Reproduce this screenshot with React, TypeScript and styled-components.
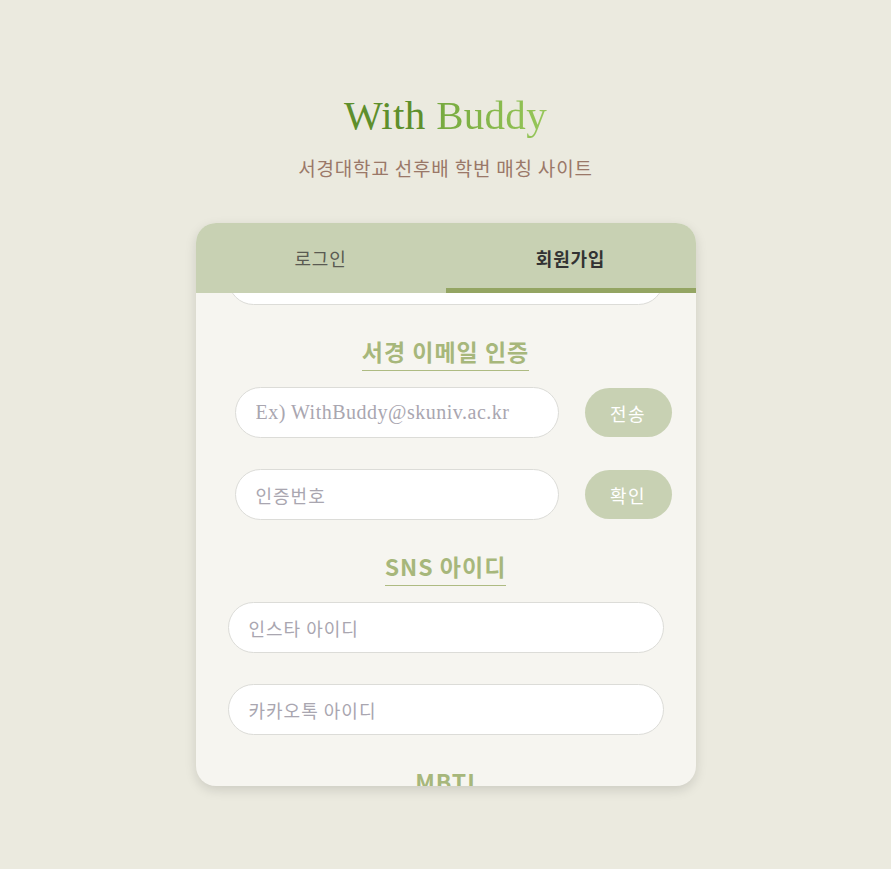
import React, { useLayoutEffect, useRef } from "react";
import styled, { createGlobalStyle } from "styled-components";

const GlobalStyle = createGlobalStyle`
  html, body { margin: 0; padding: 0; background: #ebeadf; }
  body { font-family: "Noto Sans CJK KR", "Noto Sans", sans-serif; }
  * { box-sizing: border-box; }
`;

const Page = styled.div`
  min-height: 869px;
  display: flex;
  flex-direction: column;
  align-items: center;
  padding-top: 91px;
`;

const Title = styled.h1`
  margin: 0;
  font-family: "Liberation Serif", "DejaVu Serif", serif;
  font-weight: 400;
  font-size: 41px;
  line-height: 49px;
  letter-spacing: 0.3px;
`;

const Dark = styled.span`
  color: #5e8f2c;
`;

const Light = styled.span`
  background: linear-gradient(90deg, #76a93e, #97c75a);
  -webkit-background-clip: text;
  background-clip: text;
  color: transparent;
`;

const Subtitle = styled.p`
  margin: 14px 0 0;
  font-size: 19px;
  line-height: 27px;
  color: #9a7868;
  letter-spacing: 0.8px;
`;

const Card = styled.div`
  margin-top: 42px;
  width: 500px;
  height: 563px;
  border-radius: 20px;
  background: #f6f5f0;
  box-shadow: 0 4px 12px rgba(0, 0, 0, 0.13);
  overflow: hidden;
  display: flex;
  flex-direction: column;
`;

const Tabs = styled.div`
  display: flex;
  height: 70px;
  background: #c8d1b3;
  flex-shrink: 0;
`;

const Tab = styled.div<{ $active?: boolean }>`
  flex: 1;
  display: flex;
  align-items: center;
  justify-content: center;
  font-size: 18px;
  letter-spacing: 0.8px;
  color: ${(p) => (p.$active ? "#333" : "#5a5a52")};
  font-weight: ${(p) => (p.$active ? 700 : 400)};
  border-bottom: 5px solid ${(p) => (p.$active ? "#94a563" : "transparent")};
  padding-top: 5px;
`;

const Body = styled.div`
  flex: 1;
  overflow-y: auto;
  scrollbar-width: none;
  padding: 0 32px 40px;
  display: flex;
  flex-direction: column;
  &::-webkit-scrollbar { display: none; }
`;

const SectionTitle = styled.h2<{ $first?: boolean }>`
  align-self: center;
  margin: ${(p) => (p.$first ? "32px" : "1px")} 0 16px;
  font-size: 23px;
  line-height: 29px;
  font-weight: 700;
  letter-spacing: 1px;
  color: #a7b77b;
  padding-bottom: 4px;
  border-bottom: 1px solid #aebb82;
`;

const Input = styled.input`
  height: 51px;
  width: 100%;
  border: 1px solid #dcdcd8;
  border-radius: 26px;
  background: #fff;
  padding: 0 20px;
  font-family: "Noto Sans CJK KR", sans-serif;
  font-size: 18px;
  letter-spacing: 1px;
  color: #333;
  outline: none;
  margin-bottom: 31px;
  flex-shrink: 0;
  &::placeholder { color: #a9a6b0; }
`;

const SerifInput = styled(Input)`
  font-family: "Liberation Serif", "DejaVu Serif", serif;
  font-size: 20px;
  letter-spacing: 0.5px;
  &::placeholder { color: #a9a6b0; }
`;

const Row = styled.div`
  display: flex;
  align-items: flex-start;
  gap: 26px;
  margin: 0 -8px 0 7px;
  flex-shrink: 0;
`;

const RowInput = styled(Input)`
  width: 324px;
  flex-shrink: 0;
`;

const RowSerifInput = styled(SerifInput)`
  width: 324px;
  flex-shrink: 0;
`;

const Button = styled.button`
  width: 87px;
  height: 49px;
  margin-top: 1px;
  border: none;
  border-radius: 25px;
  background: #c8d1b3;
  color: #fff;
  font-family: "Noto Sans CJK KR", sans-serif;
  font-size: 18px;
  letter-spacing: 1.5px;
  cursor: pointer;
`;

export default function App() {
  const bodyRef = useRef<HTMLDivElement>(null);
  const anchorRef = useRef<HTMLInputElement>(null);

  useLayoutEffect(() => {
    const b = bodyRef.current;
    const a = anchorRef.current;
    if (b && a) {
      b.scrollTop = a.offsetTop - b.offsetTop + a.offsetHeight - 12;
    }
  }, []);

  return (
    <>
      <GlobalStyle />
      <Page>
        <Title>
          <Dark>With</Dark> <Light>Buddy</Light>
        </Title>
        <Subtitle>서경대학교 선후배 학번 매칭 사이트</Subtitle>
        <Card>
          <Tabs>
            <Tab>로그인</Tab>
            <Tab $active>회원가입</Tab>
          </Tabs>
          <Body ref={bodyRef}>
            <SectionTitle $first>기본 정보</SectionTitle>
            <Input placeholder="이름" />
            <Input placeholder="학번" />
            <Input type="password" placeholder="비밀번호" />
            <Input ref={anchorRef} type="password" placeholder="비밀번호 확인" />
            <SectionTitle>서경 이메일 인증</SectionTitle>
            <Row>
              <RowSerifInput placeholder="Ex) WithBuddy@skuniv.ac.kr" />
              <Button>전송</Button>
            </Row>
            <Row>
              <RowInput placeholder="인증번호" />
              <Button>확인</Button>
            </Row>
            <SectionTitle>SNS 아이디</SectionTitle>
            <Input placeholder="인스타 아이디" />
            <Input placeholder="카카오톡 아이디" />
            <SectionTitle>MBTI</SectionTitle>
            <Input placeholder="MBTI" />
          </Body>
        </Card>
      </Page>
    </>
  );
}
